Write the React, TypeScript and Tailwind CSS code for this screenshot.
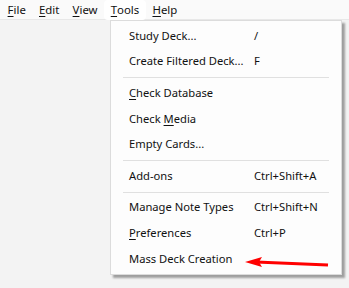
const font = { fontFamily: '"Segoe UI", "Noto Sans", "Open Sans", sans-serif' };

type Item = { label: React.ReactNode; shortcut?: string } | "sep";

const u = (c: string) => <span className="underline underline-offset-2">{c}</span>;

const items: Item[] = [
  { label: "Study Deck...", shortcut: "/" },
  { label: "Create Filtered Deck...", shortcut: "F" },
  "sep",
  { label: <>{u("C")}heck Database</> },
  { label: <>Check {u("M")}edia</> },
  { label: "Empty Cards..." },
  "sep",
  { label: "Add-ons", shortcut: "Ctrl+Shift+A" },
  "sep",
  { label: "Manage Note Types", shortcut: "Ctrl+Shift+N" },
  { label: <>{u("P")}references</>, shortcut: "Ctrl+P" },
  { label: "Mass Deck Creation" },
];

export default function App() {
  return (
    <div
      className="relative h-[288px] w-[349px] overflow-hidden bg-[#f3f3f3] text-[11.2px] text-[#111]"
      style={font}
    >
      <div className="flex h-[20px] items-center border-b border-[#e8e8e8] bg-[#fafafa] pl-[1px]">
        {[
          ["F", "ile"],
          ["E", "dit"],
          ["V", "iew"],
          ["T", "ools"],
          ["H", "elp"],
        ].map(([a, b]) => (
          <div
            key={a}
            className={`flex h-[20px] items-center rounded-[4px] px-[6.6px] text-[11.4px] ${
              a === "T" ? "bg-white" : ""
            }`}
          >
            {u(a)}
            {b}
          </div>
        ))}
      </div>

      <div className="absolute left-[110px] top-[20px] w-[232px] border border-[#dcdcdc] bg-[#fdfdfd] py-[2.5px] shadow-[3px_3px_2px_rgba(0,0,0,0.35)]">
        {items.map((it, i) =>
          it === "sep" ? (
            <div key={i} className="mx-[12px] my-[2.5px] h-px bg-[#e0e0e0]" />
          ) : (
            <div key={i} className="flex h-[25.6px] items-center pl-[18px]">
              <div className="w-[125px]">{it.label}</div>
              <div>{it.shortcut}</div>
            </div>
          )
        )}
      </div>

      <svg className="absolute left-0 top-0" width="349" height="288">
        <line x1="256" y1="262" x2="328" y2="265" stroke="#ff0000" strokeWidth="3" />
        <polygon points="245,262 262,257 259,262 262,267" fill="#ff0000" />
      </svg>
    </div>
  );
}
